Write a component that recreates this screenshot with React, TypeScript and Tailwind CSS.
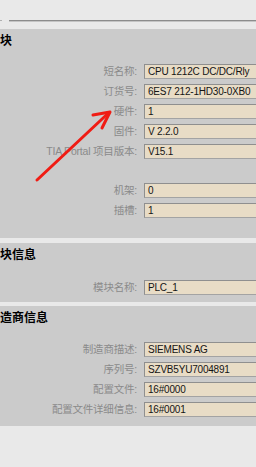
import React from 'react';

type Row = { label: string; value: string } | null;

const cjk = { fontFamily: '"Liberation Sans", "Noto Sans CJK SC", sans-serif' };

function Field({ label, value }: { label: string; value: string }) {
    return (
        <div className="flex items-center h-[15px]">
            <div className="w-[137px] shrink-0 text-right text-[10.5px] leading-none text-[#8a8a8a] whitespace-nowrap tracking-[-0.2px]">
                {label}:
            </div>
            <div className="ml-[7px] w-[140px] shrink-0 h-[15px] bg-[#e8dcc6] border border-[#a3a3a3] border-t-[#8f8f8f] border-l-[#8f8f8f] flex items-center pl-[3px] text-[10px] text-[#141414] tracking-[-0.2px] whitespace-nowrap">
                {value}
            </div>
        </div>
    );
}

function Section({ title, rows, className, bodyClass }: { title: string; rows: Row[]; className: string; bodyClass: string }) {
    return (
        <div className={`bg-[#cbcbcb] pt-[4px] ${className}`}>
            <div className="h-[16px] text-[12px] leading-[16px] font-bold text-black">{title}</div>
            <div className={`flex flex-col gap-[5px] ${bodyClass}`}>
                {rows.map((r, i) =>
                    r ? <Field key={i} label={r.label} value={r.value} /> : <div key={i} className="h-[14px]" />
                )}
            </div>
        </div>
    );
}

export default function App() {
    return (
        <div className="relative w-[256px] h-[467px] overflow-hidden bg-[#e9e9e9]" style={cjk}>
            <div className="relative h-[29px]">
                <div className="absolute left-0 top-[20px] w-[2px] h-[1px] bg-[#b0b0b0]" />
                <div className="absolute left-[9px] right-0 top-[20px] h-[1px] bg-[#8c8c8c]" />
                <div className="absolute left-[9px] right-0 top-[21px] h-[1px] bg-[#c4c4c4]" />
            </div>

            <Section
                title="块"
                className="pb-[20px]"
                bodyClass="mt-[15px]"
                rows={[
                    { label: '短名称', value: 'CPU 1212C DC/DC/Rly' },
                    { label: '订货号', value: '6ES7 212-1HD30-0XB0' },
                    { label: '硬件', value: '1' },
                    { label: '固件', value: 'V 2.2.0' },
                    { label: 'TIA Portal 项目版本', value: 'V15.1' },
                    null,
                    { label: '机架', value: '0' },
                    { label: '插槽', value: '1' },
                ]}
            />
            <div className="h-[5px]" />
            <Section
                title="块信息"
                className="pb-[7px]"
                bodyClass="mt-[17px]"
                rows={[{ label: '模块名称', value: 'PLC_1' }]}
            />
            <div className="h-[4px]" />
            <Section
                title="造商信息"
                className="pb-[9px]"
                bodyClass="mt-[16px]"
                rows={[
                    { label: '制造商描述', value: 'SIEMENS AG' },
                    { label: '序列号', value: 'SZVB5YU7004891' },
                    { label: '配置文件', value: '16#0000' },
                    { label: '配置文件详细信息', value: '16#0001' },
                ]}
            />

            {/* red annotation arrow */}
            <svg className="absolute left-0 top-0 pointer-events-none" width="256" height="467" viewBox="0 0 256 467">
                <g stroke="#f01c14" strokeWidth="3" strokeLinecap="round" fill="none">
                    <line x1="37" y1="180" x2="109" y2="112.5" />
                    <polyline points="93,115 110,112 102,128" strokeLinejoin="round" />
                </g>
            </svg>
        </div>
    );
}
